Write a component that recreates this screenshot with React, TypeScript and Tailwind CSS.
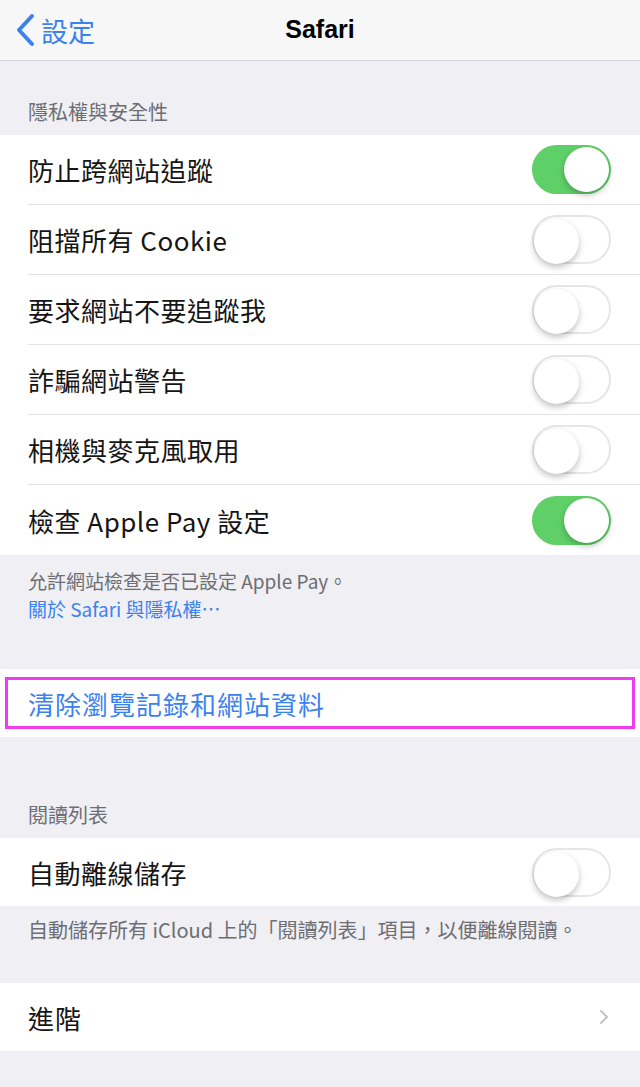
import { ChevronRight } from 'lucide-react'

const font = { fontFamily: '"Noto Sans CJK TC", "Noto Sans", sans-serif' }

function Toggle({ on }: { on: boolean }) {
  return (
    <div
      className={`relative w-[79px] h-[49px] rounded-full ${
        on ? 'bg-[#5fd068]' : 'bg-white border-2 border-[#e6e6e8]'
      }`}
    >
      <div
        className={`absolute top-[2px] w-[45px] h-[45px] rounded-full bg-white shadow-[0_3px_6px_rgba(0,0,0,0.25)] ${
          on ? 'right-[2px]' : 'left-0 top-0'
        }`}
      />
    </div>
  )
}

function Row({ label, on, last, h = 'h-[70px]' }: { label: string; on: boolean; last?: boolean; h?: string }) {
  return (
    <div className={`${h} pl-[28px]`}>
      <div className={`h-full flex items-center justify-between pr-[29px] ${last ? '' : 'border-b border-[#e3e3e6]'}`}>
        <span className="text-[26px] text-[#151515] tracking-[0.5px]">{label}</span>
        <Toggle on={on} />
      </div>
    </div>
  )
}

export default function App() {
  const privacy = [
    { label: '防止跨網站追蹤', on: true },
    { label: '阻擋所有 Cookie', on: false },
    { label: '要求網站不要追蹤我', on: false },
    { label: '詐騙網站警告', on: false },
    { label: '相機與麥克風取用', on: false },
    { label: '檢查 Apple Pay 設定', on: true },
  ]

  return (
    <div className="w-[640px] min-h-[1087px] bg-[#efeff4]" style={font}>
      {/* Nav bar */}
      <div className="h-[61px] bg-[#f7f7f8] border-b border-[#d6d6da] grid grid-cols-3 items-center">
        <div className="flex items-center pl-[14px] text-[#3a82f0]">
          <svg width="22" height="34" viewBox="0 0 22 34" fill="none">
            <path d="M18 3 L5 17 L18 31" stroke="currentColor" strokeWidth="4" strokeLinecap="round" strokeLinejoin="round" />
          </svg>
          <span className="text-[27px] ml-[5px] leading-none">設定</span>
        </div>
        <div className="text-center text-[25px] font-semibold text-black" style={{ fontFamily: '"Liberation Sans", Arial, sans-serif' }}>
          Safari
        </div>
        <div />
      </div>

      {/* Privacy section */}
      <div className="h-[74px] flex items-end pb-[8px] px-[28px] text-[20px] text-[#6d6d72]">隱私權與安全性</div>
      <div className="bg-white">
        {privacy.map((p, i) => (
          <Row key={p.label} label={p.label} on={p.on} last={i === privacy.length - 1} />
        ))}
      </div>
      <div className="h-[114px] pt-[12px] px-[28px] text-[19px] leading-[28px]">
        <div className="text-[#6d6d72]">允許網站檢查是否已設定 Apple Pay。</div>
        <div className="text-[#3a82f0]">關於 Safari 與隱私權⋯</div>
      </div>

      {/* Clear history */}
      <div className="relative h-[68px] bg-white flex items-center px-[28px]">
        <span className="text-[26px] text-[#3a82f0] tracking-[1px]">清除瀏覽記錄和網站資料</span>
        <div className="absolute left-[5px] right-[5px] top-[8px] bottom-[8px] border-[3px] border-[#ee3cee]" />
      </div>

      {/* Reading list */}
      <div className="h-[101px] flex items-end pb-[8px] px-[28px] text-[20px] text-[#6d6d72]">閱讀列表</div>
      <div className="bg-white">
        <Row label="自動離線儲存" on={false} last h="h-[68px]" />
      </div>
      <div className="h-[77px] pt-[11px] px-[28px] text-[20px] leading-[25px] text-[#6d6d72]">
        自動儲存所有 iCloud 上的「閱讀列表」項目，以便離線閱讀。
      </div>

      {/* Advanced */}
      <div className="h-[68px] bg-white flex items-center justify-between pl-[28px] pr-[24px]">
        <span className="text-[26px] text-[#151515] tracking-[1px]">進階</span>
        <ChevronRight className="w-[24px] h-[24px] text-[#c4c4c8]" strokeWidth={2} />
      </div>
    </div>
  )
}
